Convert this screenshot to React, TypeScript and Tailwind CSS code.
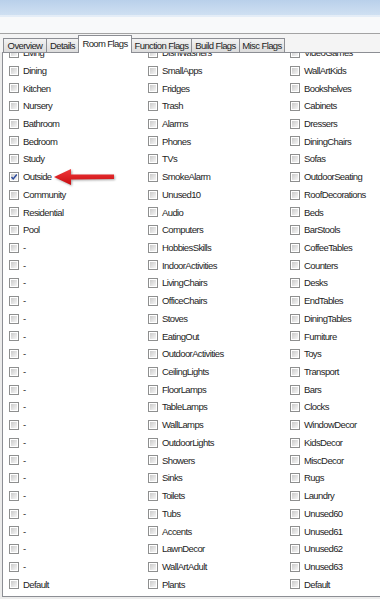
import React from "react";

const col1 = ["Living","Dining","Kitchen","Nursery","Bathroom","Bedroom","Study","Outside","Community","Residential","Pool",
  "-","-","-","-","-","-","-","-","-","-","-","-","-","-","-","-","-","-","-","Default"];
const col2 = ["DishWashers","SmallApps","Fridges","Trash","Alarms","Phones","TVs","SmokeAlarm","Unused10","Audio","Computers",
  "HobbiesSkills","IndoorActivities","LivingChairs","OfficeChairs","Stoves","EatingOut","OutdoorActivities","CeilingLights","FloorLamps","TableLamps",
  "WallLamps","OutdoorLights","Showers","Sinks","Toilets","Tubs","Accents","LawnDecor","WallArtAdult","Plants"];
const col3 = ["VideoGames","WallArtKids","Bookshelves","Cabinets","Dressers","DiningChairs","Sofas","OutdoorSeating","RoofDecorations","Beds","BarStools",
  "CoffeeTables","Counters","Desks","EndTables","DiningTables","Furniture","Toys","Transport","Bars","Clocks",
  "WindowDecor","KidsDecor","MiscDecor","Rugs","Laundry","Unused60","Unused61","Unused62","Unused63","Default"];

function Box({ checked }: { checked?: boolean }) {
  return (
    <div className="relative w-[10px] h-[10px] shrink-0 border border-[#8e8f8f] bg-white p-px">
      <div className="w-full h-full bg-gradient-to-br from-[#cbcbcb] to-[#f6f6f6]" />
      {checked && (
        <svg className="absolute left-0 top-0" width="8" height="8" viewBox="0 0 8 8">
          <path d="M1.5 4 L3.2 6 L6.8 1.5" fill="none" stroke="#2b4a9c" strokeWidth="1.4" />
        </svg>
      )}
    </div>
  );
}

function Cell({ label, checked }: { label: string; checked?: boolean }) {
  return (
    <div className="h-[17.72px] flex items-center gap-[4px]">
      <Box checked={checked} />
      <span className="leading-none whitespace-nowrap">{label}</span>
    </div>
  );
}

const tabs = [
  { t: "Overview", w: "w-[44px]" },
  { t: "Details", w: "w-[33px]" },
  { t: "Room Flags", w: "w-[54px]", sel: true },
  { t: "Function Flags", w: "w-[61px]" },
  { t: "Build Flags", w: "w-[49px]" },
  { t: "Misc Flags", w: "w-[46px]" },
];

export default function App() {
  return (
    <div
      className="w-[380px] h-[599px] overflow-hidden bg-[#ececec] flex flex-col text-[9.5px] tracking-[-0.6px] text-[#1e1e1e]"
      style={{ fontFamily: '"Liberation Sans", Arial, sans-serif' }}
    >
      <div className="h-[15px] bg-gradient-to-b from-[#b9d0ea] to-[#cfe0f2]" />
      <div className="h-[2px] bg-[#e4edf7]" />
      <div className="h-[17px] bg-[#f8f9fa] border-b border-[#a3a3a3]" />
      <div className="h-[18px] bg-[#f4f4f4] flex items-end pl-[3px]">
        {tabs.map((tab) =>
          tab.sel ? (
            <div
              key={tab.t}
              className={`${tab.w} h-[18px] bg-white border border-b-0 border-[#8c8e94] flex items-start justify-center pt-[3px] relative z-10 -mb-px -mr-px`}
            >
              <span className="leading-none whitespace-nowrap">{tab.t}</span>
            </div>
          ) : (
            <div
              key={tab.t}
              className={`${tab.w} h-[14px] bg-gradient-to-b from-[#f3f3f3] to-[#dcdcdc] border border-b-0 border-[#8c8e94] -mr-px flex items-center justify-center`}
            >
              <span className="leading-none whitespace-nowrap">{tab.t}</span>
            </div>
          )
        )}
      </div>
      <div className="relative ml-[2px] h-[545px] bg-white border-l border-t border-b border-[#8c8e94] overflow-hidden">
        <div className="-mt-[9px] pl-[6px] grid grid-cols-[139px_142px_1fr]">
          {col1.map((_, i) => (
            <React.Fragment key={i}>
              <Cell label={col1[i]} checked={col1[i] === "Outside"} />
              <Cell label={col2[i]} />
              <Cell label={col3[i]} />
            </React.Fragment>
          ))}
        </div>
        <svg
          className="absolute left-[49px] top-[113px]"
          width="66"
          height="22"
          viewBox="49 113 66 22"
          style={{ filter: "drop-shadow(1px 1px 1px rgba(0,0,0,0.35))" }}
        >
          <defs>
            <linearGradient id="ar" x1="0" y1="0" x2="0" y2="1">
              <stop offset="0" stopColor="#f0383a" />
              <stop offset="1" stopColor="#c80c10" />
            </linearGradient>
          </defs>
          <polygon
            points="51,124 68,116 68,121.5 111,121.5 111,126 68,126.5 68,132"
            fill="url(#ar)"
          />
        </svg>
      </div>
    </div>
  );
}
